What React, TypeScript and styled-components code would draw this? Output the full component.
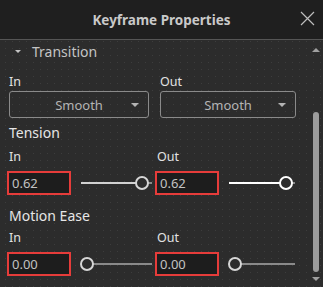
import * as React from 'react'
import styled, { createGlobalStyle } from 'styled-components'

const GlobalStyle = createGlobalStyle`
  html, body {
    margin: 0;
    padding: 0;
    background: #2d2d2d;
  }
  body {
    font-family: "Noto Sans", "Open Sans", sans-serif;
  }
`

const Panel = styled.div`
  width: 323px;
  height: 287px;
  overflow: hidden;
  display: flex;
  flex-direction: column;
  background-color: #2c2c2c;
  background-image: radial-gradient(circle, #3d3d3d 0.7px, transparent 0.9px);
  background-size: 7px 7px;
  background-position: 2px 3px;
`

const Header = styled.header`
  height: 39px;
  flex: none;
  background: #1f1f1f;
  border-bottom: 1px solid #555;
  display: flex;
  align-items: center;
  justify-content: center;
  position: relative;
`

const Title = styled.h1`
  margin: 0;
  font-size: 13.5px;
  font-weight: 700;
  color: #c9c9c9;
`

const Close = styled.button`
  position: absolute;
  right: 7px;
  top: 11px;
  width: 16px;
  height: 16px;
  padding: 0;
  border: 0;
  background: none;
  display: flex;
`

const Body = styled.div`
  flex: 1;
  display: flex;
  min-height: 0;
`

const Content = styled.div`
  flex: 1;
  padding: 1px 0 0 9px;
  display: flex;
  flex-direction: column;
`

const SectionToggle = styled.div`
  display: flex;
  align-items: center;
  height: 20px;
  gap: 11px;
  padding-left: 6px;
  color: #c4c4c4;
  font-size: 14px;
`

const Caret = styled.span<{ $size?: number; $color?: string }>`
  width: 0;
  height: 0;
  border-left: ${p => p.$size ?? 3.5}px solid transparent;
  border-right: ${p => p.$size ?? 3.5}px solid transparent;
  border-top: ${p => p.$size ?? 3.5}px solid ${p => p.$color ?? '#c4c4c4'};
`

const Pair = styled.div<{ $gap: number; $top: number }>`
  display: grid;
  grid-template-columns: auto auto;
  justify-content: start;
  column-gap: ${p => p.$gap}px;
  margin-top: ${p => p.$top}px;
`

const Field = styled.div`
  display: flex;
  flex-direction: column;
`

const Label = styled.div`
  font-size: 12.5px;
  color: #e2e2e2;
  height: 17px;
  line-height: 17px;
`

const Heading = styled.div<{ $top: number }>`
  font-size: 14px;
  color: #e6e6e6;
  margin-top: ${p => p.$top}px;
  height: 19px;
  line-height: 19px;
`

const Dropdown = styled.div<{ $width: number }>`
  box-sizing: border-box;
  width: ${p => p.$width}px;
  height: 27px;
  margin-top: 1px;
  border: 1px solid #8a8a8a;
  border-radius: 3px;
  display: flex;
  align-items: center;
  justify-content: center;
  position: relative;
  color: #b4b4b4;
  font-size: 13px;
`

const DropCaret = styled.span`
  position: absolute;
  right: 9px;
  top: 11px;
  width: 0;
  height: 0;
  border-left: 4px solid transparent;
  border-right: 4px solid transparent;
  border-top: 4px solid #b4b4b4;
`

const ValueRow = styled.div`
  display: flex;
  align-items: center;
  gap: 10px;
  margin-top: 6px;
  margin-left: -2px;
`

const NumberBox = styled.div`
  box-sizing: border-box;
  width: 64px;
  height: 24px;
  border: 2px solid #e63c3a;
  background: #1d1d1d;
  color: #c2c2c2;
  font-size: 13px;
  display: flex;
  align-items: center;
  padding-left: 3px;
`

const SliderBox = styled.div<{ $width: number }>`
  position: relative;
  width: ${p => p.$width}px;
  height: 14px;
`

const Track = styled.div<{ $color: string; $thick: number }>`
  position: absolute;
  top: 50%;
  height: ${p => p.$thick}px;
  transform: translateY(-50%);
  background: ${p => p.$color};
`

const Thumb = styled.div<{ $color: string }>`
  position: absolute;
  top: 0;
  box-sizing: border-box;
  width: 14px;
  height: 14px;
  border-radius: 50%;
  border: 2px solid ${p => p.$color};
  background: #2c2c2c;
  transform: translateX(-50%);
`

const Scrollbar = styled.div`
  width: 14px;
  flex: none;
  display: flex;
  flex-direction: column;
  align-items: center;
  padding-top: 8px;
  box-sizing: border-box;
`

const ScrollThumb = styled.div`
  width: 6px;
  height: 160px;
  margin-top: 60px;
  background: #9c9c9c;
  border-radius: 3px;
`

const ScrollArrow = styled.span<{ $up?: boolean }>`
  width: 0;
  height: 0;
  border-left: 4px solid transparent;
  border-right: 4px solid transparent;
  ${p => (p.$up ? 'border-bottom: 4px solid #a0a0a0;' : 'border-top: 4px solid #a0a0a0;')}
  margin-top: ${p => (p.$up ? 0 : 5)}px;
`

type SliderProps = {
  width: number
  thumbAt: number
  bright?: boolean
}

function Slider({ width, thumbAt, bright }: SliderProps) {
  const before = bright ? '#ffffff' : '#d2d2d2'
  const thumbColor = bright ? '#ffffff' : '#d6d6d6'
  return (
    <SliderBox $width={width}>
      {thumbAt > 7 && <Track $color={before} $thick={2} style={{ left: 0, width: thumbAt - 6 }} />}
      <Track $color="#8a8a8a" $thick={2} style={{ left: thumbAt + 6, width: width - thumbAt - 6 }} />
      <Thumb $color={thumbColor} style={{ left: thumbAt }} />
    </SliderBox>
  )
}

export default function App() {
  return (
    <>
      <GlobalStyle />
      <Panel>
        <Header>
          <Title>Keyframe Properties</Title>
          <Close aria-label="Close">
            <svg width="15" height="15" viewBox="0 0 15 15">
              <path d="M1 1 L14 14 M14 1 L1 14" stroke="#bdbdbd" strokeWidth="1.2" />
            </svg>
          </Close>
        </Header>
        <Body>
          <Content>
            <SectionToggle>
              <Caret />
              Transition
            </SectionToggle>
            <Pair $gap={11} $top={12}>
              <Field>
                <Label>In</Label>
                <Dropdown $width={140}>
                  Smooth
                  <DropCaret />
                </Dropdown>
              </Field>
              <Field>
                <Label>Out</Label>
                <Dropdown $width={136}>
                  Smooth
                  <DropCaret />
                </Dropdown>
              </Field>
            </Pair>

            <Heading $top={5}>Tension</Heading>
            <Pair $gap={5} $top={6}>
              <Field>
                <Label>In</Label>
                <ValueRow>
                  <NumberBox>0.62</NumberBox>
                  <Slider width={71} thumbAt={61} />
                </ValueRow>
              </Field>
              <Field>
                <Label>Out</Label>
                <ValueRow>
                  <NumberBox>0.62</NumberBox>
                  <Slider width={66} thumbAt={57} bright />
                </ValueRow>
              </Field>
            </Pair>

            <Heading $top={11}>Motion Ease</Heading>
            <Pair $gap={5} $top={4}>
              <Field>
                <Label>In</Label>
                <ValueRow>
                  <NumberBox>0.00</NumberBox>
                  <Slider width={71} thumbAt={6} />
                </ValueRow>
              </Field>
              <Field>
                <Label>Out</Label>
                <ValueRow>
                  <NumberBox>0.00</NumberBox>
                  <Slider width={66} thumbAt={6} />
                </ValueRow>
              </Field>
            </Pair>
          </Content>
          <Scrollbar>
            <ScrollArrow $up />
            <ScrollThumb />
            <ScrollArrow />
          </Scrollbar>
        </Body>
      </Panel>
    </>
  )
}
